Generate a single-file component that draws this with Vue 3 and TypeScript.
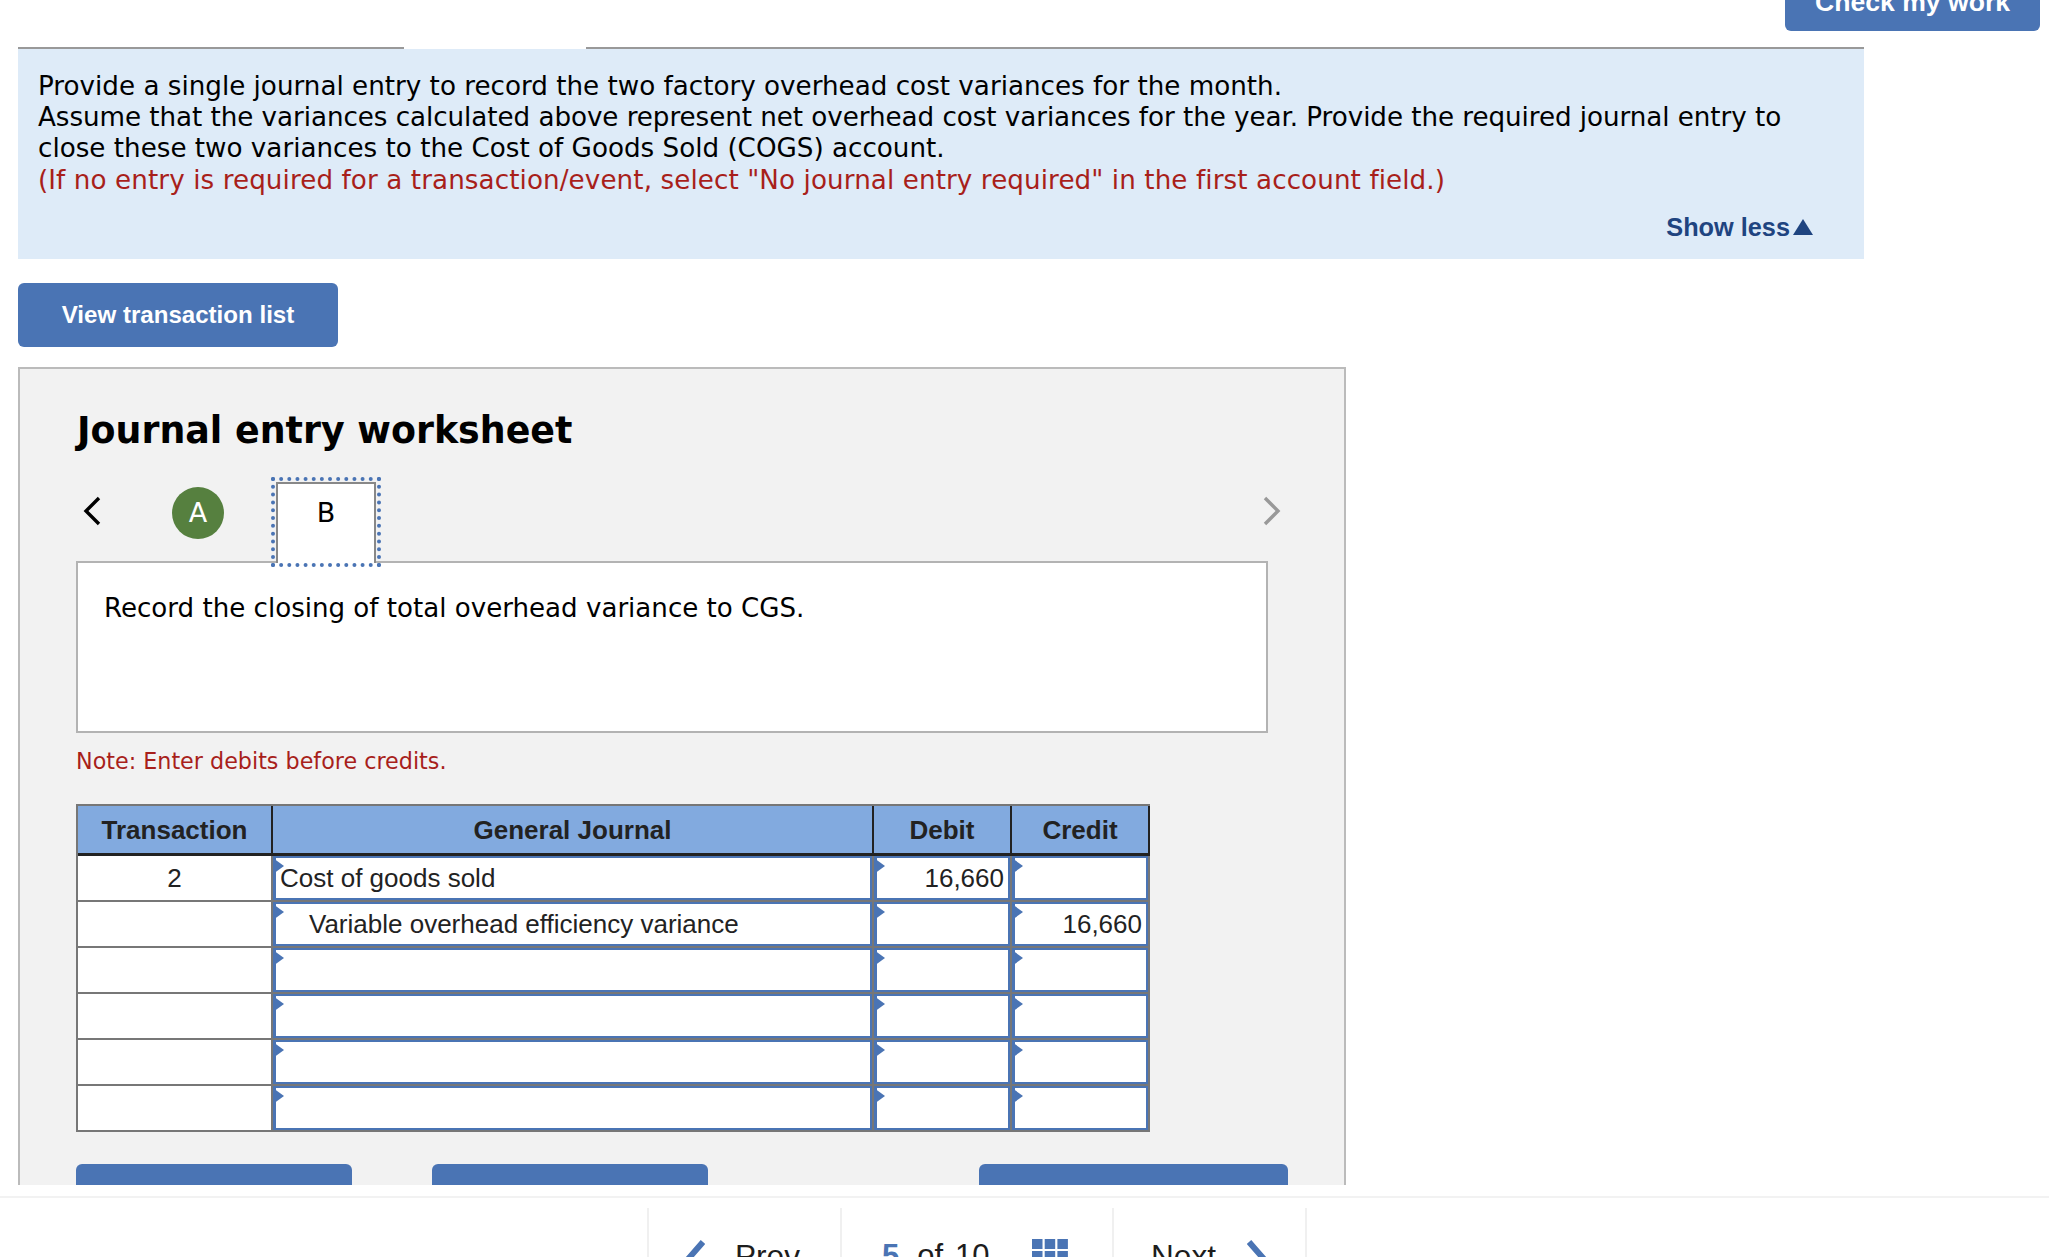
<script setup lang="ts">
interface Row { tx: string; account: string; indent: boolean; debit: string; credit: string }
const rows: Row[] = [
  { tx: '2', account: 'Cost of goods sold', indent: false, debit: '16,660', credit: '' },
  { tx: '', account: 'Variable overhead efficiency variance', indent: true, debit: '', credit: '16,660' },
  { tx: '', account: '', indent: false, debit: '', credit: '' },
  { tx: '', account: '', indent: false, debit: '', credit: '' },
  { tx: '', account: '', indent: false, debit: '', credit: '' },
  { tx: '', account: '', indent: false, debit: '', credit: '' },
]
</script>

<template>
  <div class="page">
    <div class="top">
      <div class="check"><span>Check my work</span></div>
    </div>
    <div class="rule"><i></i><b></b><i></i></div>
    <section class="prompt">
      <p>
        <span class="line">Provide a single journal entry to record the two factory overhead cost variances for the month.</span>
        <span class="line tight">Assume that the variances calculated above represent net overhead cost variances for the year. Provide the required journal entry to</span>
        <span class="line">close these two variances to the Cost of Goods Sold (COGS) account.</span>
        <span class="line red">(If no entry is required for a transaction/event, select "No journal entry required" in the first account field.)</span>
      </p>
      <div class="less">Show less<span class="up"></span></div>
    </section>
    <button class="btn view">View transaction list</button>
    <div class="clip">
      <section class="sheet">
        <h2>Journal entry worksheet</h2>
        <div class="tabs">
          <svg class="chev" width="18" height="30" viewBox="0 0 18 30"><path d="M16 2 3 15l13 13" fill="none" stroke="#000" stroke-width="3.4" /></svg>
          <div class="circle">A</div>
          <div class="focus"><div class="tab">B</div></div>
          <svg class="chev right" width="18" height="30" viewBox="0 0 18 30"><path d="M2 2l13 13L2 28" fill="none" stroke="#999" stroke-width="3.4" /></svg>
        </div>
        <div class="box">Record the closing of total overhead variance to CGS.</div>
        <p class="note">Note: Enter debits before credits.</p>
        <div class="table">
          <div class="th">Transaction</div>
          <div class="th">General Journal</div>
          <div class="th">Debit</div>
          <div class="th last">Credit</div>
          <template v-for="(r, i) in rows" :key="i">
            <div class="td tx">{{ r.tx }}</div>
            <div class="td cell"><div class="inp" :class="{ indent: r.indent }">{{ r.account }}</div></div>
            <div class="td cell"><div class="inp num">{{ r.debit }}</div></div>
            <div class="td cell last"><div class="inp num">{{ r.credit }}</div></div>
          </template>
        </div>
        <div class="actions">
          <button class="btn act"></button>
          <button class="btn act"></button>
          <button class="btn act wide"></button>
        </div>
      </section>
    </div>
    <footer class="foot">
      <div class="seg prev">
        <svg width="20" height="34" viewBox="0 0 20 34"><path d="M18 3 4 19l14 16" fill="none" stroke="#4a74b4" stroke-width="6" /></svg>
        <span>Prev</span>
      </div>
      <div class="seg mid">
        <span class="cur">5</span><span class="of">of</span><span class="tot">10</span>
        <svg class="grid" width="36" height="36" viewBox="0 0 36 36" fill="#4a74b4">
          <rect x="0" y="0" width="10.5" height="10" /><rect x="12.7" y="0" width="10.5" height="10" /><rect x="25.4" y="0" width="10.5" height="10" />
          <rect x="0" y="12" width="10.5" height="10" /><rect x="12.7" y="12" width="10.5" height="10" /><rect x="25.4" y="12" width="10.5" height="10" />
          <rect x="0" y="24" width="10.5" height="10" /><rect x="12.7" y="24" width="10.5" height="10" /><rect x="25.4" y="24" width="10.5" height="10" />
        </svg>
      </div>
      <div class="seg next">
        <span>Next</span>
        <svg width="20" height="34" viewBox="0 0 20 34"><path d="M2 3l14 16L2 35" fill="none" stroke="#4a74b4" stroke-width="6" /></svg>
      </div>
    </footer>
  </div>
</template>

<style>
html, body { margin: 0; background: #fff; }
</style>

<style scoped>
.page { width: 2049px; height: 1257px; overflow: hidden; font-family: "Liberation Sans", Arial, sans-serif; color: #1d1d1d; }
.top { height: 47px; display: flex; justify-content: flex-end; padding-right: 9px; }
.check { width: 255px; height: 31px; background: #4a74b4; border-radius: 0 0 6px 6px; color: #fff; font-weight: 700; font-size: 26.6px; display: flex; align-items: flex-end; justify-content: center; overflow: hidden; line-height: 28px; padding-bottom: 15px; box-sizing: border-box; }
.rule { display: flex; margin-left: 18px; width: 1846px; height: 2px; }
.rule i { background: #999; flex: 1; }
.rule i:first-child { flex: 0 0 386px; }
.rule b { flex: 0 0 182px; }
.prompt { margin-left: 18px; width: 1846px; height: 210px; background: #deebf8; box-sizing: border-box; padding: 22px 20px 0; position: relative; font-family: "DejaVu Sans", Verdana, sans-serif; font-size: 26.2px; line-height: 31.2px; color: #000; }
.prompt p { margin: 0; }
.line { display: block; white-space: nowrap; }
.tight { letter-spacing: -0.06px; }
.red { color: #a81f1b; letter-spacing: 0.09px; }
.less { position: absolute; right: 51px; top: 163px; color: #1f4480; font-family: "Liberation Sans", Arial, sans-serif; font-weight: 700; font-size: 25.3px; line-height: 30px; display: flex; align-items: center; gap: 3px; }
.up { width: 0; height: 0; border-left: 10px solid transparent; border-right: 10px solid transparent; border-bottom: 16px solid #1f4480; }
.btn { border: 0; background: #4a74b4; color: #fff; display: block; padding: 0; font-family: "Liberation Sans", Arial, sans-serif; font-weight: 700; }
.view { margin: 24px 0 0 18px; width: 320px; height: 64px; border-radius: 6px; font-size: 24.1px; }
.clip { margin: 20px 0 0 18px; width: 1328px; height: 818px; overflow: hidden; }
.sheet { box-sizing: border-box; width: 1328px; min-height: 900px; background: #f2f2f2; border: 2px solid #bbb; padding: 40px 56px 0; color: #000; font-family: "DejaVu Sans", Verdana, sans-serif; }
h2 { margin: 0 0 0 1px; font-size: 36.4px; line-height: 44px; font-weight: 700; }
.tabs { display: flex; align-items: flex-start; margin-top: 24px; height: 84px; width: 1205px; position: relative; }
.chev { margin: 19px 0 0 7px; flex: none; }
.chev.right { margin: 19px 0 0 auto; }
.circle { width: 52px; height: 52px; border-radius: 50%; background: #56803f; color: #fff; text-align: center; line-height: 52px; font-size: 27px; margin: 10px 0 0 71px; flex: none; }
.focus { box-sizing: border-box; width: 110px; height: 90px; margin-left: 47px; border: 4px dotted #4a74b4; padding: 1px 1px 0; position: relative; z-index: 1; flex: none; }
.tab { box-sizing: border-box; height: 81px; background: #fff; border: 2px solid #888; border-bottom: 0; text-align: center; font-size: 27px; line-height: 58px; }
.box { box-sizing: border-box; width: 1192px; height: 172px; background: #fff; border: 2px solid #b3b3b3; padding: 27px 26px; font-size: 26.1px; line-height: 36px; }
.note { margin: 14px 0 0; font-size: 22.25px; line-height: 28px; color: #a81f1b; }
.table { margin-top: 29px; display: grid; grid-template-columns: 195px 601px 138px 138px; width: 1074px; border-top: 2px solid #777; border-left: 2px solid #777; box-sizing: border-box; font-family: "Liberation Sans", Arial, sans-serif; color: #222; font-size: 26px; }
.th { height: 46px; padding-top: 1px; background: #82aadf; border-right: 2px solid #222; border-bottom: 3px solid #222; display: flex; align-items: center; justify-content: center; font-weight: 700; box-sizing: content-box; }
.td { height: 44px; border-right: 2px solid #777; border-bottom: 2px solid #777; background: #fff; }
.tx { text-align: center; line-height: 44px; }
.cell { background: #fff; }
.inp { box-sizing: border-box; height: 44px; border: 2px solid #4a74b4; border-left-width: 3px; background: #fff; line-height: 40px; padding: 0 4px; position: relative; white-space: nowrap; }
.inp::before { content: ""; position: absolute; left: -3px; top: 0; border-left: 11px solid #4a74b4; border-top: 8px solid transparent; border-bottom: 8px solid transparent; }
.indent { padding-left: 33px; }
.num { text-align: right; }
.actions { display: flex; margin-top: 32px; }
.act { width: 276px; height: 60px; border-radius: 6px; margin-right: 80px; flex: none; }
.act.wide { width: 309px; margin: 0 0 0 191px; }
.foot { margin-top: 11px; border-top: 2px solid #f2f2f2; padding: 10px 0 0 647px; display: flex; height: 60px; font-size: 31px; color: #1d1d1d; }
.seg { box-sizing: border-box; border-left: 2px solid #f0f0f0; height: 80px; display: flex; align-items: flex-start; padding-top: 30px; line-height: 36px; }
.prev { width: 193px; padding-left: 36px; gap: 30px; font-size: 31.6px; }
.prev svg, .next svg { margin-top: 1px; flex: none; }
.mid { width: 272px; padding-left: 40px; }
.cur { color: #4a74b4; font-weight: 700; }
.of { margin-left: 18px; }
.tot { margin-left: 12px; }
.grid { margin: 1px 0 0 42px; flex: none; }
.next { width: 195px; padding-left: 37px; gap: 31px; border-right: 2px solid #f0f0f0; font-size: 31.6px; }
</style>
